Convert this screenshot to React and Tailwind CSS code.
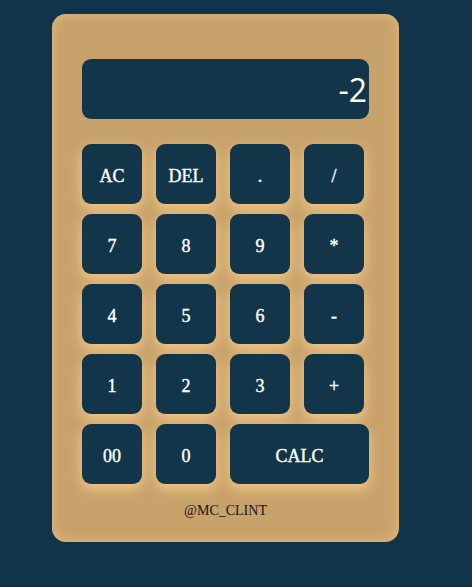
import React from "react";

const rows = [
  ["AC", "DEL", ".", "/"],
  ["7", "8", "9", "*"],
  ["4", "5", "6", "-"],
  ["1", "2", "3", "+"],
];

const Key = ({ label, wide }) => (
  <button
    className={`${wide ? "w-[139px]" : "w-[60px]"} h-[60px] rounded-[9px] bg-[#12354a] text-white text-[18px] [-webkit-text-stroke:0.4px_white] flex items-center justify-center pt-[4px] shadow-[0_5px_13px_rgba(255,214,150,0.8)]`}
  >
    {label}
  </button>
);

export default function App() {
  return (
    <div
      className="min-h-[587px] w-full bg-[#12344a] pt-[14px] pl-[52px]"
      style={{ fontFamily: '"Liberation Serif", serif' }}
    >
      <div className="w-[347px] h-[528px] rounded-[14px] bg-[#c8a26b] shadow-[inset_0_0_12px_rgba(255,214,150,0.55)] px-[30px] pt-[45px] flex flex-col">
        <div className="h-[60px] w-[287px] rounded-[9px] bg-[#12354a] flex items-center justify-end pr-[2px] pt-[2px]">
          <span
            className="text-white text-[32px] leading-none"
            style={{ fontFamily: '"Open Sans", sans-serif' }}
          >
            -2
          </span>
        </div>

        <div className="mt-[25px] flex flex-col gap-[10px]">
          {rows.map((row, i) => (
            <div key={i} className="flex gap-[14px]">
              {row.map((k) => (
                <Key key={k} label={k} />
              ))}
            </div>
          ))}
          <div className="flex gap-[14px]">
            <Key label="00" />
            <Key label="0" />
            <Key label="CALC" wide />
          </div>
        </div>

        <div className="mt-[16px] text-center text-[14px] text-[#1a1410] w-[287px]">
          @MC_CLINT
        </div>
      </div>
    </div>
  );
}
